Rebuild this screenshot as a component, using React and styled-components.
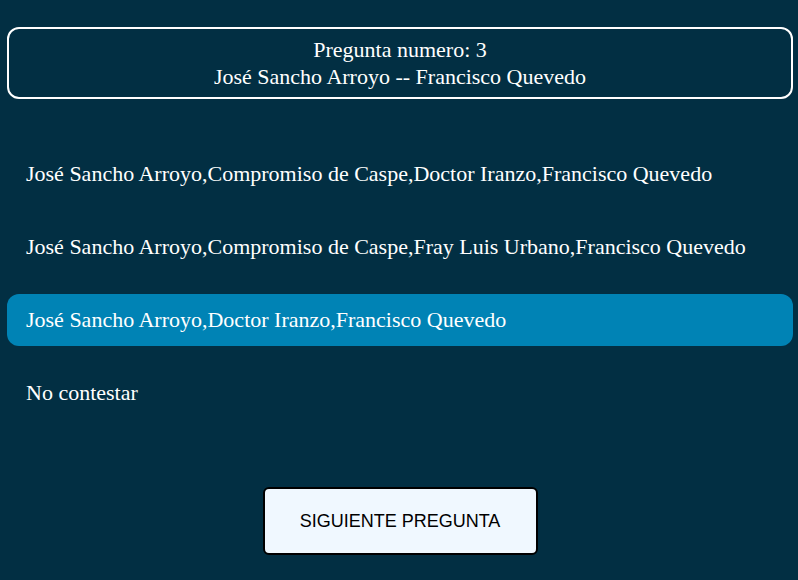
import React, { useState } from 'react'
import styled, { createGlobalStyle } from 'styled-components'

const GlobalStyle = createGlobalStyle`
  html, body {
    margin: 0;
    padding: 0;
    background: #022f43;
  }
  body {
    font-family: "Liberation Serif", "Times New Roman", serif;
    color: #ffffff;
  }
`

const options = [
  'José Sancho Arroyo,Compromiso de Caspe,Doctor Iranzo,Francisco Quevedo',
  'José Sancho Arroyo,Compromiso de Caspe,Fray Luis Urbano,Francisco Quevedo',
  'José Sancho Arroyo,Doctor Iranzo,Francisco Quevedo',
  'No contestar',
]

export default function App() {
  const [selected, setSelected] = useState(2)

  return (
    <>
      <GlobalStyle />
      <Wrapper>
        <Header>
          <HeaderLine>Pregunta numero: 3</HeaderLine>
          <HeaderLine>José Sancho Arroyo -- Francisco Quevedo</HeaderLine>
        </Header>
        <OptionList>
          {options.map((opt, i) => (
            <Option key={i} $active={selected === i} onClick={() => setSelected(i)}>
              {opt}
            </Option>
          ))}
        </OptionList>
        <Footer>
          <NextButton>SIGUIENTE PREGUNTA</NextButton>
        </Footer>
      </Wrapper>
    </>
  )
}

const Wrapper = styled.div`
  padding: 27px 5px 0 7px;
  min-height: 580px;
  box-sizing: border-box;
`

const Header = styled.div`
  border: 2px solid #ffffff;
  border-radius: 12px;
  height: 72px;
  box-sizing: border-box;
  display: flex;
  flex-direction: column;
  justify-content: center;
  align-items: center;
  font-size: 22px;
`

const HeaderLine = styled.div`
  line-height: 27px;
`

const OptionList = styled.div`
  margin-top: 49px;
  display: flex;
  flex-direction: column;
  gap: 21px;
`

const Option = styled.div`
  height: 52px;
  display: flex;
  align-items: center;
  padding-left: 19px;
  border-radius: 12px;
  font-size: 22px;
  cursor: pointer;
  background: ${p => (p.$active ? '#0083b5' : 'transparent')};
`

const Footer = styled.div`
  display: flex;
  justify-content: center;
  margin-top: 68px;
`

const NextButton = styled.button`
  width: 275px;
  height: 68px;
  background: #f0f8ff;
  border: 2px solid #000000;
  border-radius: 6px;
  font-family: "Liberation Sans", Arial, sans-serif;
  font-size: 18px;
  color: #000000;
  cursor: pointer;
`
